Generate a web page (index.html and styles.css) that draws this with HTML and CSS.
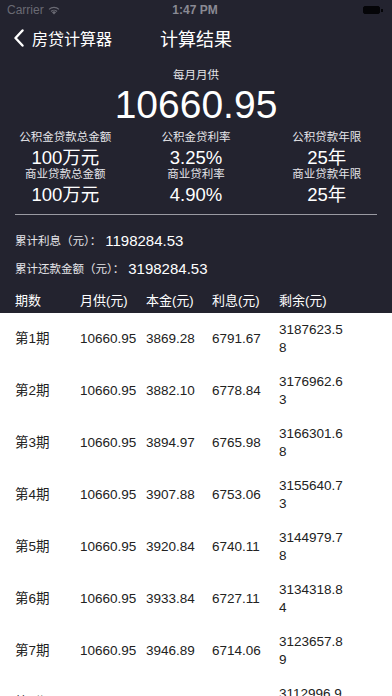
FILE: index.html
```html
<!DOCTYPE html>
<html lang="zh-CN">
<head>
  <meta charset="UTF-8" />
  <title>计算结果</title>
  <meta name="viewport" content="width=device-width, initial-scale=1.0" />
  <link rel="stylesheet" href="styles.css">
</head>
<body>
  <div class="screen">
    <div class="dark">
      <div class="status-bar">
        <div class="carrier">Carrier
          <svg class="wifi" width="12" height="9" viewBox="0 0 12 9">
            <path d="M6 8.6 L3.9 6.3 A3 3 0 0 1 8.1 6.3 Z" fill="#6a6a74"/>
            <path d="M2.6 5 A4.9 4.9 0 0 1 9.4 5 L8.6 5.9 A3.7 3.7 0 0 0 3.4 5.9 Z" fill="#6a6a74"/>
            <path d="M0.6 2.9 A7.8 7.8 0 0 1 11.4 2.9 L10.5 3.8 A6.5 6.5 0 0 0 1.5 3.8 Z" fill="#6a6a74"/>
          </svg>
        </div>
        <div class="time">1:47 PM</div>
        <div class="battery"><span class="battery-body"></span><span class="battery-tip"></span></div>
      </div>

      <div class="nav">
        <div class="back">
          <svg width="12" height="18" viewBox="0 0 12 18">
            <polyline points="9.5,1.5 2.5,9 9.5,16.5" fill="none" stroke="#ffffff" stroke-width="2.4" stroke-linecap="round" stroke-linejoin="round"/>
          </svg>
          <span>房贷计算器</span>
        </div>
        <div class="nav-title">计算结果</div>
        <div></div>
      </div>

      <div class="monthly">
        <div class="monthly-label">每月月供</div>
        <div class="monthly-value">10660.95</div>
      </div>

      <div class="params">
        <div class="param"><div class="param-label">公积金贷款总金额</div><div class="param-value">100万元</div></div>
        <div class="param"><div class="param-label">公积金贷利率</div><div class="param-value">3.25%</div></div>
        <div class="param"><div class="param-label">公积贷款年限</div><div class="param-value">25年</div></div>
        <div class="param"><div class="param-label">商业贷款总金额</div><div class="param-value">100万元</div></div>
        <div class="param"><div class="param-label">商业贷利率</div><div class="param-value">4.90%</div></div>
        <div class="param"><div class="param-label">商业贷款年限</div><div class="param-value">25年</div></div>
      </div>

      <div class="divider"></div>

      <div class="totals">
        <div class="total"><span class="total-label">累计利息（元）：</span><span class="total-value">1198284.53</span></div>
        <div class="total"><span class="total-label">累计还款金额（元）：</span><span class="total-value">3198284.53</span></div>
      </div>

      <div class="row head">
        <div>期数</div>
        <div>月供(元)</div>
        <div>本金(元)</div>
        <div>利息(元)</div>
        <div>剩余(元)</div>
      </div>
    </div>

    <div class="table">
      <div class="row"><div>第1期</div><div>10660.95</div><div>3869.28</div><div>6791.67</div><div class="rest">3187623.58</div></div>
      <div class="row"><div>第2期</div><div>10660.95</div><div>3882.10</div><div>6778.84</div><div class="rest">3176962.63</div></div>
      <div class="row"><div>第3期</div><div>10660.95</div><div>3894.97</div><div>6765.98</div><div class="rest">3166301.68</div></div>
      <div class="row"><div>第4期</div><div>10660.95</div><div>3907.88</div><div>6753.06</div><div class="rest">3155640.73</div></div>
      <div class="row"><div>第5期</div><div>10660.95</div><div>3920.84</div><div>6740.11</div><div class="rest">3144979.78</div></div>
      <div class="row"><div>第6期</div><div>10660.95</div><div>3933.84</div><div>6727.11</div><div class="rest">3134318.84</div></div>
      <div class="row"><div>第7期</div><div>10660.95</div><div>3946.89</div><div>6714.06</div><div class="rest">3123657.89</div></div>
      <div class="row"><div>第8期</div><div>10660.95</div><div>3959.98</div><div>6700.97</div><div class="rest">3112996.94</div></div>
    </div>
  </div>
</body>
</html>
```

FILE: styles.css
```css
body {
  margin: 0;
  font-family: 'Liberation Sans', 'Noto Sans CJK SC', sans-serif;
  background: #ffffff;
}

.screen {
  width: 392px;
  height: 696px;
  overflow: hidden;
}

.dark {
  background: #23232f;
  color: #ffffff;
  padding-bottom: 4px;
}

.status-bar {
  height: 20px;
  display: flex;
  align-items: center;
  justify-content: space-between;
  padding: 0 9px 0 7px;
  font-size: 12px;
}

.carrier {
  color: #6a6a74;
  display: flex;
  align-items: center;
  gap: 4px;
  width: 80px;
}

.time {
  color: #8a8a94;
  font-weight: 600;
}

.battery {
  width: 80px;
  display: flex;
  justify-content: flex-end;
  align-items: center;
}

.battery-body {
  width: 15px;
  height: 6px;
  background: #050508;
  border: 1px solid #050508;
  border-radius: 2px;
}

.battery-tip {
  width: 1.5px;
  height: 3px;
  background: #050508;
  margin-left: 1px;
}

.nav {
  height: 44px;
  display: grid;
  grid-template-columns: 1fr auto 1fr;
  align-items: center;
  margin-top: -4px;
}

.back {
  display: flex;
  align-items: center;
  gap: 7px;
  padding-left: 13px;
  font-size: 16px;
}

.back svg {
  display: block;
}

.nav-title {
  font-size: 18px;
}

.monthly {
  text-align: center;
  margin-top: 7px;
}

.monthly-label {
  font-size: 11.5px;
  line-height: 16px;
  color: #e6e6ea;
}

.monthly-value {
  font-size: 39px;
  line-height: 44px;
}

.params {
  display: grid;
  grid-template-columns: repeat(3, 1fr);
  text-align: center;
  margin-top: 3px;
}

.param-label {
  font-size: 11.5px;
  line-height: 14px;
  color: #e6e6ea;
}

.param-value {
  font-size: 18.5px;
  line-height: 19px;
  margin-top: 4px;
}

.divider {
  height: 1px;
  background: #9a9aa2;
  margin: 10px 15px 0;
}

.totals {
  display: flex;
  flex-direction: column;
  gap: 8px;
  padding: 15px 0 0 15px;
}

.total {
  display: flex;
  align-items: center;
  height: 20px;
}

.total-label {
  font-size: 11.5px;
  color: #e6e6ea;
  margin-right: 4px;
}

.total-value {
  font-size: 15px;
}

.row {
  display: grid;
  grid-template-columns: 65px 66px 66px 67px 66px;
  padding-left: 15px;
  align-items: center;
}

.head {
  margin-top: 11px;
  height: 20px;
  font-size: 13px;
}

.table {
  color: #222222;
  font-size: 13.5px;
}

.table .row {
  height: 52px;
  line-height: 18px;
}

.rest {
  word-break: break-all;
}
```
